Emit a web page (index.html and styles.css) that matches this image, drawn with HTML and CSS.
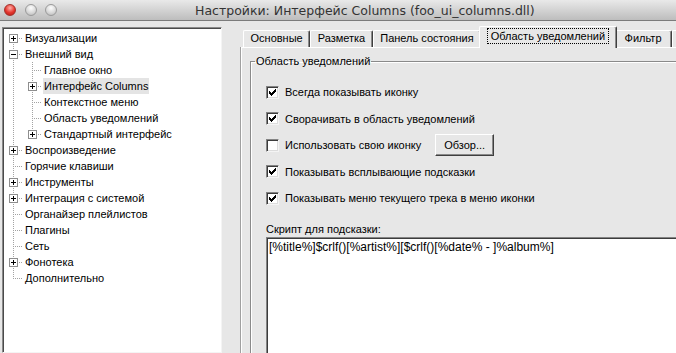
FILE: index.html
```html
<!DOCTYPE html>
<html>
    <head>
        <meta charset="utf-8">
        <title>Настройки: Интерфейс Columns</title>
        <link rel="stylesheet" href="styles.css">
    </head>
    <body>
        <div class="window">
            <div class="titlebar">
                <div class="lights">
                    <span class="light close"></span>
                    <span class="light"></span>
                    <span class="light"></span>
                </div>
                <div class="title">Настройки: Интерфейс Columns (foo_ui_columns.dll)</div>
            </div>

            <div class="main">
                <div class="tree">
                    <div class="row"><span class="g top"><span class="box plus"></span></span><span class="label">Визуализации</span></div>
                    <div class="row"><span class="g tee"><span class="box minus"></span></span><span class="label">Внешний вид</span></div>
                    <div class="row"><span class="g pass"></span><span class="g tee"></span><span class="label">Главное окно</span></div>
                    <div class="row"><span class="g pass"></span><span class="g tee"><span class="box plus"></span></span><span class="label selected">Интерфейс Columns</span></div>
                    <div class="row"><span class="g pass"></span><span class="g tee"></span><span class="label">Контекстное меню</span></div>
                    <div class="row"><span class="g pass"></span><span class="g tee"></span><span class="label">Область уведомлений</span></div>
                    <div class="row"><span class="g pass"></span><span class="g end"><span class="box plus"></span></span><span class="label">Стандартный интерфейс</span></div>
                    <div class="row"><span class="g tee"><span class="box plus"></span></span><span class="label">Воспроизведение</span></div>
                    <div class="row"><span class="g tee"></span><span class="label">Горячие клавиши</span></div>
                    <div class="row"><span class="g tee"><span class="box plus"></span></span><span class="label">Инструменты</span></div>
                    <div class="row"><span class="g tee"><span class="box plus"></span></span><span class="label">Интеграция с системой</span></div>
                    <div class="row"><span class="g tee"></span><span class="label">Органайзер плейлистов</span></div>
                    <div class="row"><span class="g tee"></span><span class="label">Плагины</span></div>
                    <div class="row"><span class="g tee"></span><span class="label">Сеть</span></div>
                    <div class="row"><span class="g tee"><span class="box plus"></span></span><span class="label">Фонотека</span></div>
                    <div class="row"><span class="g end"></span><span class="label">Дополнительно</span></div>
                </div>

                <div class="prefs">
                    <div class="tabs">
                        <span class="tab">Основные</span>
                        <span class="tab">Разметка</span>
                        <span class="tab">Панель состояния</span>
                        <span class="tab active"><span class="focus">Область уведомлений</span></span>
                        <span class="tab">Фильтр</span>
                        <span class="tab">Сортировка</span>
                    </div>
                    <div class="panel">
                        <fieldset class="group">
                            <legend>Область уведомлений</legend>
                            <div class="groupBody">
                                <div class="options">
                                    <label class="check"><span class="cb on"></span>Всегда показывать иконку</label>
                                    <label class="check"><span class="cb on"></span>Сворачивать в область уведомлений</label>
                                    <div class="check"><span class="cb"></span>Использовать свою иконку<button class="button">Обзор...</button></div>
                                    <label class="check"><span class="cb on"></span>Показывать всплывающие подсказки</label>
                                    <label class="check"><span class="cb on"></span>Показывать меню текущего трека в меню иконки</label>
                                </div>
                                <p class="scriptLabel">Скрипт для подсказки:</p>
                                <textarea class="script" readonly>[%title%]$crlf()[%artist%][$crlf()[%date% - ]%album%]</textarea>
                            </div>
                        </fieldset>
                    </div>
                </div>
            </div>
        </div>
    </body>
</html>
```

FILE: styles.css
```css
* {
    margin: 0;
    padding: 0;
    box-sizing: border-box;
}

body {
    background-color: #e7e7e7;
    font-family: 'Liberation Sans', Arial, sans-serif;
    font-size: 11px;
    color: #000;
    overflow: hidden;
}

.window {
    width: 100vw;
    height: 100vh;
    display: flex;
    flex-flow: column nowrap;
}

/* mac title bar */
.titlebar {
    height: 21px;
    flex: none;
    display: flex;
    align-items: center;
    background: linear-gradient(#e9e9e9, #bdbdbd);
    border-bottom: 1px solid #7b7b7b;
}
.lights {
    display: flex;
    gap: 8.5px;
    padding-left: 4px;
    margin-top: -1px;
}
.light {
    width: 12px;
    height: 12px;
    border-radius: 50%;
    border: 1px solid #9a9a9a;
    background: radial-gradient(circle at 50% 30%, #fdfdfd, #d9d9d9 55%, #b3b3b3);
}
.light.close {
    border-color: #a3302a;
    background: radial-gradient(circle at 50% 30%, #ffb0aa, #e5362e 55%, #b01c15);
}
.title {
    margin-left: 138px;
    font-family: 'DejaVu Sans', sans-serif;
    font-size: 12.5px;
    color: #333;
    white-space: nowrap;
}

.main {
    flex: 1;
    display: flex;
    flex-flow: row nowrap;
    overflow: hidden;
}

/* tree */
.tree {
    width: 220px;
    flex: none;
    margin: 6px 0 0 2px;
    padding: 2px 0 0 0;
    background-color: #fff;
    border: 1px solid;
    border-color: #8a8a8a #f4f4f4 #f4f4f4 #8a8a8a;
    box-shadow: inset 1px 1px 0 #4a4a4a;
}
.row {
    height: 16px;
    display: flex;
    align-items: flex-start;
    padding-left: 1px;
}
.g {
    width: 19px;
    height: 16px;
    flex: none;
    display: flex;
    justify-content: center;
    padding-top: 4px;
    --v: repeating-linear-gradient(to bottom, #a3a3a3 0 1px, transparent 1px 2px);
    --h: repeating-linear-gradient(to right, #a3a3a3 0 1px, transparent 1px 2px);
}
.g.tee {
    background: var(--h) 9px 8px / 10px 1px no-repeat, var(--v) 9px 0 / 1px 16px no-repeat;
}
.g.top {
    background: var(--h) 9px 8px / 10px 1px no-repeat, var(--v) 9px 8px / 1px 8px no-repeat;
}
.g.end {
    background: var(--h) 9px 8px / 10px 1px no-repeat, var(--v) 9px 0 / 1px 9px no-repeat;
}
.g.pass {
    background: var(--v) 9px 0 / 1px 16px no-repeat;
}
.box {
    width: 9px;
    height: 9px;
    border: 1px solid #8e8e8e;
    background: linear-gradient(#000, #000) center / 5px 1px no-repeat, #fff;
}
.box.plus {
    background: linear-gradient(#000, #000) center / 5px 1px no-repeat,
                linear-gradient(#000, #000) center / 1px 5px no-repeat, #fff;
}
.label {
    line-height: 16px;
    padding: 0 1px;
    margin-left: 1px;
    white-space: nowrap;
}
.selected {
    background-color: #e4e4e4;
}

/* tabs */
.prefs {
    flex: 1;
    min-width: 0;
    margin-left: 19px;
    padding-top: 5px;
    display: flex;
    flex-flow: column nowrap;
}
.tabs {
    height: 21px;
    flex: none;
    display: flex;
    align-items: flex-end;
    padding-left: 2px;
    white-space: nowrap;
}
.tab {
    height: 17px;
    line-height: 15px;
    padding: 0 6.5px;
    border: 1px solid #fff;
    border-bottom: none;
    border-right-color: #3f3f3f;
    border-radius: 2px 2px 0 0;
    box-shadow: inset -1px 0 0 #8a8a8a;
}
.tab:nth-child(5) {
    padding: 0 9px;
}
.tab.active {
    position: relative;
    height: 22px;
    margin: 0 -2px -1px;
    padding: 2px 7.5px 0;
    background-color: #e7e7e7;
    z-index: 1;
}
.focus {
    display: inline-block;
    outline: 1px dotted #000;
    outline-offset: 0;
    padding: 0 3px;
    line-height: 14px;
}

.panel {
    flex: 1;
    margin-right: -40px;
    border-top: 1px solid #fff;
    border-left: 1px solid #fff;
    box-shadow: -1px 0 0 #a0a0a0;
    padding: 7px 0 0 8px;
}
.group {
    height: 400px;
    border: 1px solid #8a8a8a;
    box-shadow: inset 1px 1px 0 #fff, 1px 1px 0 #fff;
    padding: 0 0 0 4px;
}
.group legend {
    padding: 0 1px;
    line-height: 13px;
}
.groupBody {
    padding-left: 11px;
}

.options {
    display: flex;
    flex-flow: column nowrap;
    gap: 6.5px;
    padding-top: 14px;
}
.check {
    height: 20px;
    display: flex;
    align-items: center;
    white-space: nowrap;
}
.cb {
    width: 13px;
    height: 13px;
    flex: none;
    margin-right: 6px;
    background-color: #fff;
    border: 1px solid;
    border-color: #848484 #f4f4f4 #f4f4f4 #848484;
    box-shadow: inset 1px 1px 0 #3c3c3c, inset -1px -1px 0 #dcdcdc;
}
.cb.on {
    background: url("data:image/svg+xml,%3Csvg xmlns='http://www.w3.org/2000/svg' width='11' height='11' shape-rendering='crispEdges'%3E%3Cpath d='M8 2h1v1h-1zM7 3h2v1h-2zM2 4h1v1h-1zM6 4h3v1h-3zM2 5h2v1h-2zM5 5h3v1h-3zM2 6h5v1h-5zM3 7h3v1h-3zM4 8h1v1h-1z' fill='%23000'/%3E%3C/svg%3E") 0 0 / 11px 11px no-repeat, #fff;
}
.button {
    width: 59px;
    height: 22px;
    margin-left: 14px;
    font-family: inherit;
    font-size: 11px;
    color: #000;
    background-color: #e7e7e7;
    border: 1px solid;
    border-color: #fff #3f3f3f #3f3f3f #fff;
    box-shadow: inset -1px -1px 0 #8a8a8a;
}

.scriptLabel {
    margin-top: 15px;
    line-height: 13px;
}
.script {
    display: block;
    width: 460px;
    height: 140px;
    margin-top: 1px;
    padding: 2px 2px;
    resize: none;
    overflow: hidden;
    font-family: inherit;
    font-size: 12px;
    line-height: 14px;
    color: #000;
    background-color: #fff;
    border: 1px solid;
    border-color: #848484 #f4f4f4 #f4f4f4 #848484;
    box-shadow: inset 1px 1px 0 #3c3c3c;
    outline: none;
}
```
